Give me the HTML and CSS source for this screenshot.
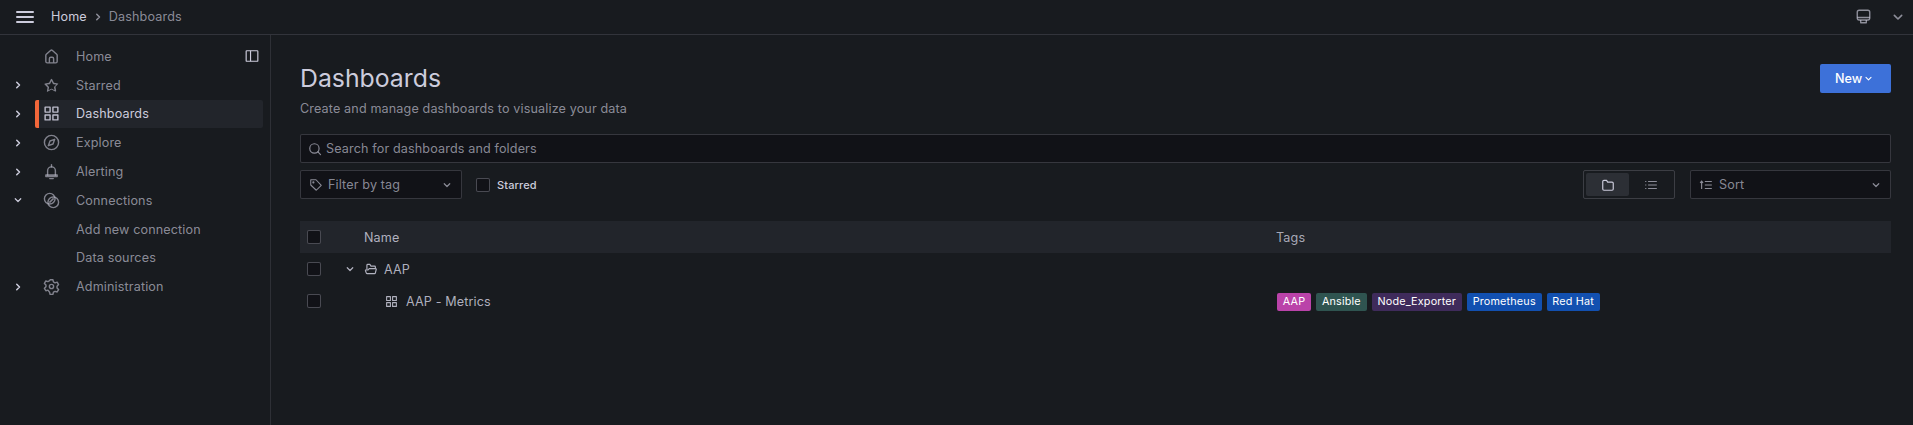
FILE: index.html
```html
<!DOCTYPE html>
<html lang="en">
<head>
  <meta charset="UTF-8" />
  <title>Dashboards</title>
  <link rel="stylesheet" href="styles.css">
</head>
<body>

  <svg class="sprite" width="0" height="0">
    <symbol id="i-home" viewBox="0 0 24 24"><path fill="currentColor" d="M20,8h0L14,2.74a3,3,0,0,0-4,0L4,8a3,3,0,0,0-1,2.26V19a3,3,0,0,0,3,3H18a3,3,0,0,0,3-3V10.25A3,3,0,0,0,20,8ZM14,20H10V15a1,1,0,0,1,1-1h2a1,1,0,0,1,1,1Zm5-1a1,1,0,0,1-1,1H16V15a3,3,0,0,0-3-3H11a3,3,0,0,0-3,3v5H6a1,1,0,0,1-1-1V10.25a1,1,0,0,1,.34-.75l6-5.25a1,1,0,0,1,1.32,0l6,5.25a1,1,0,0,1,.34.75Z"/></symbol>
    <symbol id="i-star" viewBox="0 0 24 24"><path fill="currentColor" d="M22,9.67A1,1,0,0,0,21.14,9l-5.69-.83L12.9,3a1,1,0,0,0-1.8,0L8.55,8.16,2.86,9a1,1,0,0,0-.81.68,1,1,0,0,0,.25,1l4.13,4-1,5.68A1,1,0,0,0,6.9,20.44L12,17.76l5.1,2.68a.93.93,0,0,0,.46.12,1,1,0,0,0,.59-.19,1,1,0,0,0,.4-1l-1-5.68,4.13-4A1,1,0,0,0,22,9.67Zm-6.15,4a1,1,0,0,0-.29.88l.72,4.2-3.76-2a1.06,1.06,0,0,0-.94,0l-3.76,2,.72-4.2a1,1,0,0,0-.29-.88l-3-3,4.21-.61a1,1,0,0,0,.76-.55L12,5.7l1.88,3.82a1,1,0,0,0,.76.55l4.21.61Z"/></symbol>
    <symbol id="i-apps" viewBox="0 0 24 24"><path fill="currentColor" d="M10,13H3a1,1,0,0,0-1,1v7a1,1,0,0,0,1,1h7a1,1,0,0,0,1-1V14A1,1,0,0,0,10,13ZM9,20H4V15H9ZM21,2H14a1,1,0,0,0-1,1v7a1,1,0,0,0,1,1h7a1,1,0,0,0,1-1V3A1,1,0,0,0,21,2ZM20,9H15V4h5Zm1,4H14a1,1,0,0,0-1,1v7a1,1,0,0,0,1,1h7a1,1,0,0,0,1-1V14A1,1,0,0,0,21,13Zm-1,7H15V15h5ZM10,2H3A1,1,0,0,0,2,3v7a1,1,0,0,0,1,1h7a1,1,0,0,0,1-1V3A1,1,0,0,0,10,2ZM9,9H4V4H9Z"/></symbol>
    <symbol id="i-compass" viewBox="0 0 24 24"><g fill="none" stroke="currentColor" stroke-width="2" stroke-linejoin="round"><circle cx="12" cy="12" r="10"/><path d="M16.5 7.5l-2.4 6.6-6.6 2.4 2.4-6.6z"/></g></symbol>
    <symbol id="i-bell" viewBox="0 0 24 24"><g fill="none" stroke="currentColor" stroke-width="2" stroke-linecap="round" stroke-linejoin="round"><path d="M6.500 17v-6a5.500 5.500 0 0 1 11 0v6"/><path d="M12 5.500V2.500"/><path d="M4 17h16v2H4z"/><path d="M9.500 22h5"/></g></symbol>
    <symbol id="i-conn" viewBox="0 0 24 24"><g fill="none" stroke="currentColor" stroke-width="2"><circle cx="9.500" cy="9.500" r="7.500"/><circle cx="14.500" cy="14.500" r="7.500"/><path d="M9 15l6-6"/></g></symbol>
    <symbol id="i-cog" viewBox="0 0 24 24"><g fill="none" stroke="currentColor" stroke-width="2" stroke-linejoin="round"><circle cx="12" cy="12" r="3"/><path d="M10 2.500h4l.7 3 2.300 1.300 3-.9 2 3.400-2.200 2.200v2.600l2.200 2.200-2 3.400-3-.9-2.300 1.300-.7 3h-4l-.7-3L7 17.100l-3 .9-2-3.400 2.200-2.200v-2.600L2 7.600l2-3.400 3 .9 2.300-1.300z"/></g></symbol>
    <symbol id="i-right" viewBox="0 0 24 24"><path fill="none" stroke="currentColor" stroke-width="3" stroke-linecap="round" stroke-linejoin="round" d="M9.500 6.500l5.500 5.500-5.500 5.500"/></symbol>
    <symbol id="i-down" viewBox="0 0 24 24"><path fill="none" stroke="currentColor" stroke-width="2.400" stroke-linecap="round" stroke-linejoin="round" d="M6.500 9.500l5.500 5.500 5.500-5.500"/></symbol>
    <symbol id="i-search" viewBox="0 0 24 24"><g fill="none" stroke="currentColor" stroke-width="2" stroke-linecap="round"><circle cx="11" cy="11" r="8"/><path d="M17 17l4.500 4.500"/></g></symbol>
    <symbol id="i-tag" viewBox="0 0 24 24"><g fill="none" stroke="currentColor" stroke-width="1.800" stroke-linejoin="round"><path d="M3 3h9l9 9.500-8.500 8.500L3 12z"/><circle cx="7.500" cy="7.500" r="1"/></g></symbol>
    <symbol id="i-folder" viewBox="0 0 24 24"><path fill="none" stroke="currentColor" stroke-width="2" stroke-linejoin="round" d="M3 6a2 2 0 0 1 2-2h4.500l2 3H19a2 2 0 0 1 2 2v10a2 2 0 0 1-2 2H5a2 2 0 0 1-2-2z"/></symbol>
    <symbol id="i-folder-open" viewBox="0 0 24 24"><path fill="none" stroke="currentColor" stroke-width="2" stroke-linejoin="round" d="M5 12V5.500a1.500 1.500 0 0 1 1.500-1.500h3.500l2 3h6a1.500 1.500 0 0 1 1.500 1.500V11M5.500 20h12.500a1.500 1.500 0 0 0 1.500-1.200l1.500-6a1 1 0 0 0-1-1.300H9l-2 2H3.500a1 1 0 0 0-1 1.300l1.500 4.200a1.500 1.500 0 0 0 1.500 1z"/></symbol>
    <symbol id="i-list" viewBox="0 0 24 24"><path fill="none" stroke="currentColor" stroke-width="2" d="M7 6h15M7 12h15M7 18h15M2 6h2M2 12h2M2 18h2"/></symbol>
    <symbol id="i-sort" viewBox="0 0 24 24"><path fill="none" stroke="currentColor" stroke-width="2" d="M10 6h12M10 12h12M10 18h12M4.500 19V6M2 8.500l2.500-3 2.500 3"/></symbol>
    <symbol id="i-dock" viewBox="0 0 24 24"><g fill="none" stroke="currentColor" stroke-width="2"><rect x="2" y="3" width="20" height="18" rx="1"/><path d="M9.500 3v18"/></g></symbol>
    <symbol id="i-monitor" viewBox="0 0 24 24"><g fill="none" stroke="currentColor" stroke-width="2.200" stroke-linejoin="round"><rect x="2" y="2" width="20" height="15.500" rx="3"/><path d="M2 13.500h20M7.500 17.500v4.500h9v-4.500"/></g></symbol>
  </svg>

  <header class="topbar">
    <button class="menu-btn" aria-label="Menu"><span></span><span></span><span></span></button>
    <nav class="crumbs">
      <span class="crumb-home">Home</span>
      <svg class="crumb-sep"><use href="#i-right"/></svg>
      <span>Dashboards</span>
    </nav>
    <div class="top-actions">
      <svg class="top-monitor"><use href="#i-monitor"/></svg>
      <svg class="top-down"><use href="#i-down"/></svg>
    </div>
  </header>

  <div class="layout">
    <aside class="sidebar">
      <ul class="nav">
        <li class="nav-item">
          <span class="nav-arrow"></span>
          <span class="nav-link"><svg class="nav-icon"><use href="#i-home"/></svg>Home</span>
          <svg class="dock"><use href="#i-dock"/></svg>
        </li>
        <li class="nav-item">
          <span class="nav-arrow"><svg><use href="#i-right"/></svg></span>
          <span class="nav-link"><svg class="nav-icon"><use href="#i-star"/></svg>Starred</span>
        </li>
        <li class="nav-item">
          <span class="nav-arrow"><svg><use href="#i-right"/></svg></span>
          <span class="nav-link active"><svg class="nav-icon"><use href="#i-apps"/></svg>Dashboards</span>
        </li>
        <li class="nav-item">
          <span class="nav-arrow"><svg><use href="#i-right"/></svg></span>
          <span class="nav-link"><svg class="nav-icon"><use href="#i-compass"/></svg>Explore</span>
        </li>
        <li class="nav-item">
          <span class="nav-arrow"><svg><use href="#i-right"/></svg></span>
          <span class="nav-link"><svg class="nav-icon"><use href="#i-bell"/></svg>Alerting</span>
        </li>
        <li class="nav-item">
          <span class="nav-arrow"><svg><use href="#i-down"/></svg></span>
          <span class="nav-link"><svg class="nav-icon"><use href="#i-conn"/></svg>Connections</span>
        </li>
        <li class="nav-item">
          <span class="nav-arrow"></span>
          <span class="nav-link sub">Add new connection</span>
        </li>
        <li class="nav-item">
          <span class="nav-arrow"></span>
          <span class="nav-link sub">Data sources</span>
        </li>
        <li class="nav-item">
          <span class="nav-arrow"><svg><use href="#i-right"/></svg></span>
          <span class="nav-link"><svg class="nav-icon"><use href="#i-cog"/></svg>Administration</span>
        </li>
      </ul>
    </aside>

    <main class="main">
      <div class="page-head">
        <div>
          <h1>Dashboards</h1>
          <p class="subtitle">Create and manage dashboards to visualize your data</p>
        </div>
        <button class="btn-new">New<svg><use href="#i-down"/></svg></button>
      </div>

      <div class="field search">
        <svg class="icon"><use href="#i-search"/></svg>
        <span>Search for dashboards and folders</span>
      </div>

      <div class="filters">
        <div class="field tag-filter">
          <svg class="icon"><use href="#i-tag"/></svg>
          <span>Filter by tag</span>
          <svg class="icon caret"><use href="#i-down"/></svg>
        </div>
        <label class="starred"><span class="check"></span>Starred</label>
        <div class="view-toggle">
          <span class="view-btn on"><svg class="icon"><use href="#i-folder"/></svg></span>
          <span class="view-btn"><svg class="icon"><use href="#i-list"/></svg></span>
        </div>
        <div class="field sort">
          <svg class="icon"><use href="#i-sort"/></svg>
          <span>Sort</span>
          <svg class="icon caret"><use href="#i-down"/></svg>
        </div>
      </div>

      <div class="table">
        <div class="row head">
          <span class="cell-check"><span class="check"></span></span>
          <span class="cell-name">Name</span>
          <span>Tags</span>
        </div>
        <div class="row">
          <span class="cell-check"><span class="check"></span></span>
          <span class="cell-name folder">
            <svg class="icon row-caret"><use href="#i-down"/></svg>
            <svg class="icon"><use href="#i-folder-open"/></svg>
            AAP
          </span>
          <span></span>
        </div>
        <div class="row">
          <span class="cell-check"><span class="check"></span></span>
          <span class="cell-name board">
            <svg class="icon"><use href="#i-apps"/></svg>
            AAP - Metrics
          </span>
          <span class="tags">
            <span class="tag tag-pink">AAP</span>
            <span class="tag tag-teal">Ansible</span>
            <span class="tag tag-purple">Node_Exporter</span>
            <span class="tag tag-blue">Prometheus</span>
            <span class="tag tag-blue">Red Hat</span>
          </span>
        </div>
      </div>
    </main>
  </div>

</body>
</html>
```

FILE: styles.css
```css
* {
  box-sizing: border-box;
}
html, body {
  height: 100%;
}
body {
  margin: 0;
  overflow: hidden;
  background: #181b1f;
  color: #ccccdc;
  font-family: Inter, "Noto Sans", sans-serif;
  font-size: 12.6px;
  letter-spacing: 0.135px;
}
.sprite {
  position: absolute;
}
svg {
  display: block;
  flex: none;
}
.icon {
  width: 14px;
  height: 14px;
}

/* top bar */
.topbar {
  display: flex;
  align-items: center;
  height: 35px;
  padding-left: 16px;
  padding-bottom: 1px;
  border-bottom: 1px solid rgba(204,204,220,0.15);
}
.menu-btn {
  display: flex;
  flex-direction: column;
  justify-content: space-between;
  width: 18px;
  height: 12px;
  padding: 0;
  margin-right: 17px;
  background: none;
  border: 0;
}
.menu-btn span {
  height: 2px;
  background: #ccccdc;
  border-radius: 1px;
}
.crumbs {
  display: flex;
  align-items: center;
  gap: 5px;
  color: rgba(204,204,220,0.65);
}
.crumb-home {
  color: #ccccdc;
}
.crumb-sep {
  width: 12px;
  height: 12px;
}
.top-actions {
  display: flex;
  align-items: center;
  gap: 19px;
  margin-left: auto;
  padding-right: 7px;
  color: rgba(204,204,220,0.65);
}
.top-monitor {
  width: 15px;
  height: 15px;
}
.top-down {
  width: 16px;
  height: 16px;
}

/* side nav */
.layout {
  display: flex;
  height: 390px;
}
.sidebar {
  width: 271px;
  flex: none;
  border-right: 1px solid rgba(204,204,220,0.12);
  padding-top: 7px;
}
.nav {
  list-style: none;
  margin: 0;
  padding: 0;
}
.nav-item {
  display: flex;
  align-items: center;
  height: 28.800px;
  position: relative;
}
.nav-arrow {
  width: 35px;
  flex: none;
  padding-left: 12px;
  color: #ccccdc;
}
.nav-arrow svg {
  width: 12px;
  height: 12px;
}
.nav-link {
  display: flex;
  align-items: center;
  width: 228px;
  height: 100%;
  padding-left: 7.500px;
  color: rgba(204,204,220,0.65);
  border-radius: 2px;
}
.nav-link.sub {
  padding-left: 41px;
}
.nav-link.active {
  background: #22252b;
  color: #ccccdc;
  border-left: 4px solid #f2673a;
  padding-left: 3.500px;
}
.nav-icon {
  width: 17px;
  height: 17px;
  margin-right: 16.500px;
  opacity: 0.9;
}
.dock {
  position: absolute;
  left: 245px;
  top: 7px;
  width: 14px;
  height: 14px;
  color: #ccccdc;
}

/* main */
.main {
  flex: 1;
  padding: 24px 22px 0 29px;
  min-width: 0;
}
.page-head {
  display: flex;
  justify-content: space-between;
  align-items: flex-start;
}
h1 {
  margin: 0;
  font-size: 24.800px;
  font-weight: 400;
  line-height: 38px;
  letter-spacing: 0;
}
.subtitle {
  margin: 2px 0 0;
  line-height: 20px;
  color: rgba(204,204,220,0.65);
}
.btn-new {
  display: flex;
  align-items: center;
  width: 71px;
  height: 29px;
  margin-top: 5px;
  padding: 0 0 0 15px;
  background: #3d71d9;
  color: #fff;
  border: 0;
  border-radius: 2px;
  font: inherit;
  font-weight: 500;
}
.btn-new svg {
  width: 11px;
  height: 11px;
  margin-left: 1px;
}
.field {
  display: flex;
  align-items: center;
  height: 29px;
  background: #111217;
  border: 1px solid rgba(204,204,220,0.2);
  border-radius: 2px;
  color: rgba(204,204,220,0.65);
}
.search {
  gap: 4px;
  margin-top: 15px;
  padding-left: 7px;
}
.filters {
  display: flex;
  align-items: center;
  margin-top: 7px;
}
.tag-filter {
  width: 162px;
  gap: 5px;
  padding: 0 8px;
}
.caret {
  width: 12px;
  height: 12px;
  margin-left: auto;
}
.check {
  display: block;
  width: 14px;
  height: 14px;
  border: 1px solid rgba(204,204,220,0.3);
  border-radius: 2px;
  background: #111217;
}
.starred {
  display: flex;
  align-items: center;
  gap: 7px;
  margin-left: 14px;
  font-size: 11px;
  font-weight: 500;
}
.view-toggle {
  display: flex;
  height: 29px;
  padding: 2px;
  margin-left: auto;
  border: 1px solid rgba(204,204,220,0.2);
  border-radius: 2px;
  color: rgba(204,204,220,0.65);
}
.view-btn {
  display: flex;
  align-items: center;
  justify-content: center;
  width: 43px;
  border-radius: 2px;
}
.view-btn.on {
  background: #2c2f35;
  color: #ccccdc;
}
.sort {
  width: 201px;
  gap: 6px;
  margin-left: 15px;
  padding: 0 8px;
}

/* table */
.table {
  margin-top: 22px;
}
.row {
  display: grid;
  grid-template-columns: 40px 937px 1fr;
  align-items: center;
  height: 32px;
}
.row.head {
  grid-template-columns: 40px 936px 1fr;
  background: #22252b;
  color: rgba(204,204,220,0.8);
}
.cell-check {
  padding-left: 7px;
}
.cell-name {
  display: flex;
  align-items: center;
  padding-left: 24px;
  color: rgba(204,204,220,0.85);
}
.folder {
  padding-left: 4px;
}
.row-caret {
  width: 12px;
  height: 12px;
  margin-right: 8px;
}
.folder .icon:not(.row-caret) {
  margin-right: 6px;
}
.board {
  padding-left: 45px;
}
.board .icon {
  width: 13px;
  height: 13px;
  margin-right: 8px;
}
.tags {
  display: flex;
  gap: 5px;
  padding-top: 2px;
}
.tag {
  height: 18px;
  padding: 0 5.800px;
  border-radius: 2px;
  color: #fff;
  font-size: 10.800px;
  line-height: 18px;
  letter-spacing: 0.18px;
}
.tag-pink {
  background: #ba43a9;
}
.tag-teal {
  background: #2f5450;
}
.tag-purple {
  background: #3f2b5b;
}
.tag-blue {
  background: #1250b0;
}
```
